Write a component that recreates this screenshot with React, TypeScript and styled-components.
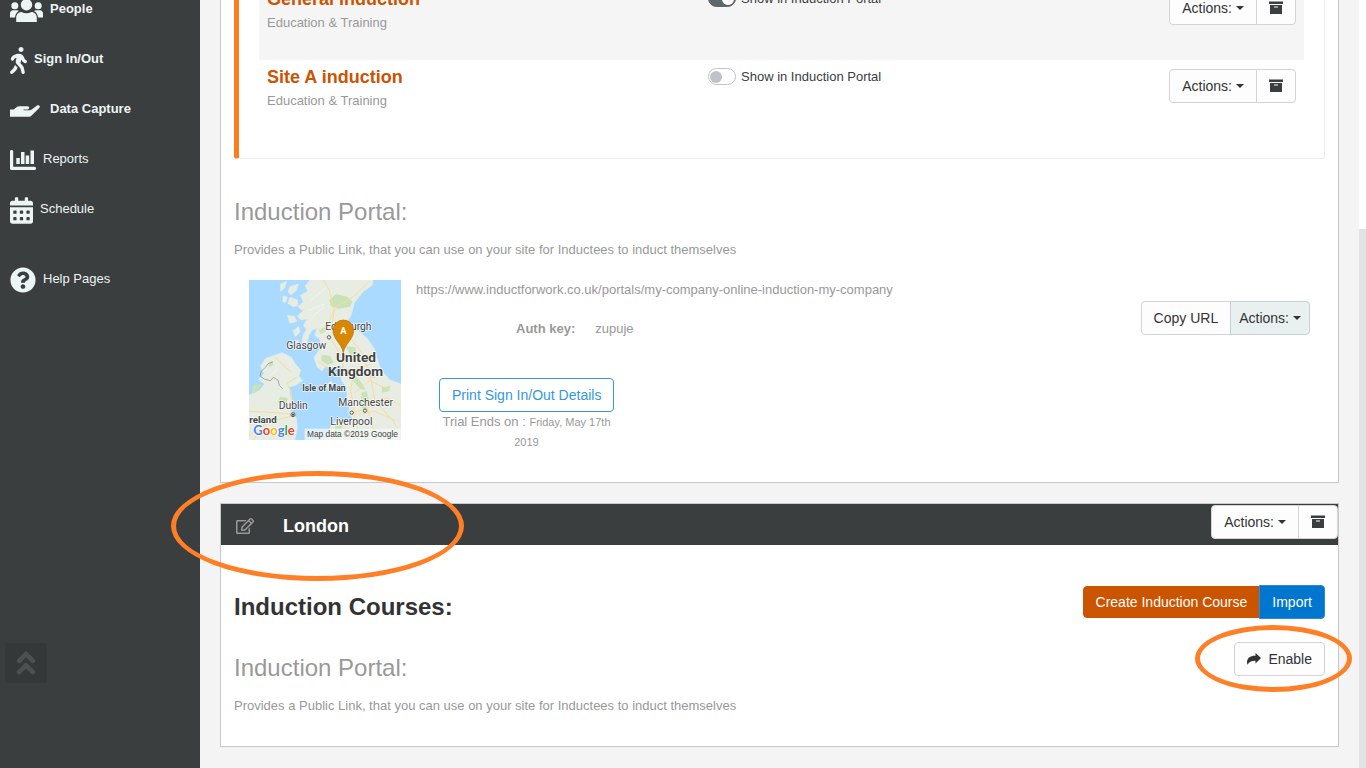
import React from "react";
import styled, { createGlobalStyle, css } from "styled-components";
import {
  FaAngleDoubleUp,
  FaCalendarAlt,
  FaQuestionCircle,
  FaRegEdit,
  FaWalking,
} from "react-icons/fa";

const GlobalStyle = createGlobalStyle`
  *, *::before, *::after { box-sizing: border-box; }
  body {
    margin: 0;
    background: #f4f4f4;
    color: #3a3d3e;
    font: 13px/20px "Liberation Sans", Arial, sans-serif;
  }
  h2, h3, p, ul { margin: 0; padding: 0; font-weight: normal; }
  ul { list-style: none; }
`;

const Shell = styled.div`
  display: grid;
  grid-template-columns: 200px minmax(0, 1fr) 7px;
  min-height: 100vh;
  overflow: hidden;
`;

const Sidebar = styled.nav`
  display: flex;
  flex-direction: column;
  justify-content: space-between;
  background: #3b3e3f;
`;

const NavList = styled.ul`
  margin-top: -15px;
`;

const NavItem = styled.li<{ $apart?: boolean }>`
  margin-top: ${(p) => (p.$apart ? "20px" : "0")};
`;

const NavLink = styled.a<{ $strong?: boolean; $gap: number }>`
  display: flex;
  align-items: center;
  gap: ${(p) => p.$gap}px;
  height: 50px;
  padding-left: 10px;
  color: #edf4f4;
  font-weight: ${(p) => (p.$strong ? "bold" : "normal")};
  text-decoration: none;

  span { padding-bottom: 2px; }
  svg { flex: none; }
`;

const TopButton = styled.button`
  display: grid;
  place-items: center;
  width: 42px;
  height: 40px;
  margin: 0 0 85px 5px;
  padding: 0;
  border: 0;
  border-radius: 3px;
  background: #343838;
  color: #4c5051;
`;

const Main = styled.main`
  padding: 0 20px 21px;
`;

const ScrollTrack = styled.div`
  background: #fff;
  padding-top: 229px;
  display: flex;
`;

const ScrollThumb = styled.div`
  flex: 1;
  background: #e3e3e3;
`;

const Panel = styled.section`
  margin-bottom: 20px;
  border: 1px solid #c8c8c8;
  background: #fff;

  &:first-child { border-top: 0; }
  &:last-child { margin-bottom: 0; }
`;

const PanelBody = styled.div`
  padding: 0 13px 30px;
`;

const CourseBox = styled.ul`
  margin-top: -19px;
  padding: 0 20px 20px;
  border: solid #ececec;
  border-width: 1px 1px 1px 5px;
  border-left-color: #ff7b1c;
  border-radius: 3px;
`;

const CourseRow = styled.li<{ $shaded?: boolean }>`
  display: grid;
  grid-template-columns: 3fr 3fr 1fr;
  align-items: start;
  height: 78px;
  padding: 8px;
  background: ${(p) => (p.$shaded ? "#f5f5f5" : "#fff")};
`;

const CourseTitle = styled.a`
  display: block;
  margin-bottom: 5px;
  color: #cb5400;
  font-size: 18px;
  font-weight: bold;
  line-height: 18px;
  text-decoration: none;
`;

const Muted = styled.p`
  color: #999;
`;

const SwitchLabel = styled.label`
  display: flex;
  align-items: center;
  gap: 5px;
  height: 17px;
`;

const Switch = styled.input`
  appearance: none;
  display: flex;
  align-items: center;
  width: 28px;
  height: 17px;
  margin: 0;
  padding: 0 1px;
  border: 1px solid #bdc3c7;
  border-radius: 9px;
  background: #fff;

  &::before {
    content: "";
    width: 12px;
    height: 12px;
    border-radius: 50%;
    background: #bdc3c7;
  }
  &:checked {
    justify-content: flex-end;
    border-color: #5c666b;
    background: #5c666b;
  }
  &:checked::before { background: #fff; }
`;

type Tone = "plain" | "tinted" | "outline" | "orange" | "blue";

const tones = {
  plain: css`background: #fdfdfd; border-color: #d4d4d4; color: #333;`,
  tinted: css`background: #e8f1f0; border-color: #c6d2d2; color: #333;`,
  outline: css`background: #fff; border-color: #3498db; color: #3498db;`,
  orange: css`background: #cb5400; border-color: #cb5400; color: #fff;`,
  blue: css`background: #0076ce; border-color: #2a8ad6; color: #fff;`,
};

const Button = styled.button<{ $tone?: Tone; $slim?: boolean; $short?: boolean }>`
  display: inline-flex;
  align-items: center;
  justify-content: center;
  gap: 4px;
  height: ${(p) => (p.$short ? 32 : 34)}px;
  padding: 0 ${(p) => (p.$slim ? 8 : 12)}px;
  border: 1px solid;
  border-radius: 4px;
  font: 14px/20px "Liberation Sans", Arial, sans-serif;
  white-space: nowrap;
  ${(p) => tones[p.$tone ?? "plain"]}
`;

const ButtonGroup = styled.div`
  display: flex;
  align-items: center;
  justify-content: flex-end;

  ${Button}:not(:first-child) {
    margin-left: -1px;
    border-top-left-radius: 0;
    border-bottom-left-radius: 0;
  }
  ${Button}:not(:last-child) {
    border-top-right-radius: 0;
    border-bottom-right-radius: 0;
  }
`;

const RowActions = styled(ButtonGroup)`
  padding-top: 1px;
`;

const Caret = styled.span`
  border: 4px solid transparent;
  border-top-color: currentColor;
  border-bottom: 0;
`;

const PortalTitle = styled.h3`
  color: #999;
  font-size: 24px;
  line-height: 26px;
`;

const PortalIntro = styled(Muted)`
  margin-top: 15px;
`;

const FirstPortal = styled.div`
  padding-top: 40px;
`;

const PortalDetails = styled.div`
  display: flex;
  align-items: flex-start;
  gap: 15px;
  padding: 20px 15px 0;
`;

const PortalInfo = styled.div`
  flex: 1;
  min-width: 0;
  color: #999;
`;

const AuthRow = styled.dl`
  display: flex;
  gap: 20px;
  margin: 19px 0 0 100px;

  dt { font-weight: bold; }
  dd { margin: 0; }
`;

const PrintBlock = styled.div`
  width: 175px;
  margin: 39px 0 0 23px;
  text-align: center;

  small { font-size: 11px; }
`;

const PortalActions = styled(ButtonGroup)`
  padding-top: 21px;
`;

const PanelHeader = styled.header`
  position: relative;
  display: flex;
  align-items: flex-start;
  justify-content: space-between;
  height: 41px;
  padding-top: 1px;
  background: #3b3e3f;
`;

const SiteName = styled.h2`
  display: flex;
  align-items: center;
  gap: 29px;
  height: 41px;
  padding-left: 15px;
  color: #fff;
  font-size: 18px;
  font-weight: bold;
`;

const EditLink = styled.a`
  display: flex;
  color: #999;
`;

const CoursesBar = styled.div`
  display: flex;
  align-items: flex-start;
  justify-content: space-between;
  padding-top: 40px;
`;

const CoursesTitle = styled.h3`
  padding-top: 9px;
  color: #333;
  font-size: 24px;
  font-weight: bold;
  line-height: 26px;
`;

const PortalBar = styled.div`
  display: flex;
  align-items: flex-start;
  justify-content: space-between;
  padding-top: 22px;

  ${PortalTitle} { padding-top: 13px; }
`;

const EnableWrap = styled.div`
  position: relative;
  display: flex;

  ${Button} { gap: 7px; }
`;

const Ring = styled.span<{ $x: number; $y: number; $w: number; $h: number }>`
  position: absolute;
  left: ${(p) => p.$x}px;
  top: ${(p) => p.$y}px;
  width: ${(p) => p.$w}px;
  height: ${(p) => p.$h}px;
  border: 5px solid #ff7f27;
  border-radius: 50%;
  pointer-events: none;
`;

const MapPicture = styled.svg`
  flex: none;
  width: 152px;
  height: 160px;

  text {
    font-family: Roboto, sans-serif;
    fill: #444;
    stroke: #fff;
    stroke-width: 5px;
    stroke-opacity: 0.75;
    stroke-linejoin: round;
    paint-order: stroke;
  }
  .plain { stroke: none; }
  .pin { fill: #fff; }
  .credit { font-family: "Liberation Sans", Arial, sans-serif; }
  .brand { font-family: Lato, sans-serif; }
`;

const ArchiveIcon = () => (
  <svg width="14" height="14" viewBox="0 0 14 14" aria-hidden="true">
    <path fill="#3b3e3f" fillRule="evenodd" d="M0 .4h14V3H0zM1 4h12v9H1zM5 5.500v1h4v-1z" />
  </svg>
);

const ShareIcon = () => (
  <svg width="14" height="12" viewBox="0 0 14 12" aria-hidden="true">
    <path fill="#333" d="M14 5 8.500 0v2.700C3 2.700.2 4.800 0 9.200c0 1 .2 1.800.5 2.500C1.900 8.900 4.200 7.700 8.500 7.700v2.700z" />
  </svg>
);

const PeopleIcon = () => (
  <svg width="33" height="26" viewBox="0 0 33 26" fill="currentColor" aria-hidden="true">
    <circle cx="16.500" cy="7.800" r="5.700" />
    <circle cx="4.800" cy="8.800" r="3.500" />
    <circle cx="28.200" cy="8.800" r="3.500" />
    <path d="M6.200 25v-4.200c0-3.600 2.400-5.800 5.400-5.800 1.400.8 3 1.200 4.900 1.200s3.500-.4 4.900-1.200c3 0 5.400 2.200 5.400 5.800V25z" />
    <path d="M0 20.500v-3.700C0 14.700 1.300 13.300 3 13.300h4c.8 0 1.500.3 2 .8-2.300 1.200-3.700 3.400-4 6.400zM33 20.500v-3.700c0-2.100-1.300-3.500-3-3.500h-4c-.8 0-1.500.3-2 .8 2.300 1.200 3.700 3.400 4 6.400z" />
  </svg>
);

const HandIcon = () => (
  <svg width="30" height="13" viewBox="0 0 30 13" fill="currentColor" aria-hidden="true">
    <path d="M0 5.500h3.600L6.200 3.400C7.200 2.600 8.200 2.300 9.400 2.300h8.300c2 0 2 3.100 0 3.100h-4.200v.9h6.100c.8 0 1.500-.2 2.100-.7l5.300-4c1.800-1.300 3.900.7 2.300 2.300l-7.700 7.600c-.9.8-1.700 1.300-3.100 1.300H0z" />
  </svg>
);

const ChartIcon = () => (
  <svg width="26" height="20" viewBox="0 0 26 20" fill="currentColor" aria-hidden="true">
    <path d="M1.500 0C2.600 0 3.200.6 3.200 1.500v15.300H24.500c2 0 2 3.200 0 3.200H1.500C.6 20 0 19.400 0 18.500v-17C0 .6.600 0 1.500 0z" />
    <path d="M6.300 8h3.500v6H6.300zM11 2h3.500v12H11zM15.700 5.500h3.500V14h-3.500zM20.500.500H24V14h-3.500z" />
  </svg>
);

const WalkIcon = styled(FaWalking)`
  width: 17px;
  height: 27px;
`;

const CalendarIcon = styled(FaCalendarAlt)`
  width: 23px;
  height: 27px;
`;

const HelpIcon = styled(FaQuestionCircle)`
  width: 26px;
  height: 26px;
`;

const UkMap = () => (
  <MapPicture viewBox="27 30 456 480" role="img" aria-label="Map of the United Kingdom">
    <rect x="27" y="30" width="456" height="480" fill="#aadaff" />
    <g fill="#e7ede3" stroke="#e7ede3" strokeWidth="2">
      <path d="M210 30L196 48 204 64 182 76 190 96 174 110 190 122 172 138 184 150 202 146 190 166 200 178 190 194 186 218 200 222 206 198 216 180 232 174 224 196 238 206 246 228 232 248 222 262 232 292 246 302 258 288 280 296 312 290 304 306 304 330 318 350 322 374 314 392 330 408 324 428 340 446 318 456 294 450 276 462 266 484 254 510H483V342L450 330 424 302 410 262 404 238 382 206 356 184 318 176 288 172 318 160 334 134 342 100 366 68 398 44V30Z" />
      <path d="M62 288L76 266 98 258 126 248 154 262 166 282 182 300 176 318 188 332 166 346 148 350 150 378 158 402 152 424 168 442 172 472 164 510H27V376L58 362 74 342 56 328 72 312Z" />
      <path d="M150 50l24-8-4 18-16 14-10-8zM130 78l12 4-6 16-8-4zM150 82l22 8 2 16-14 4-16-10zM142 136l22 4 6 14-20 6zM160 182l16-12 4 16-14 14zM162 216l12-6 2 18-10 12zM210 222l12-4 2 16-10 4zM122 42l18-8-8 22-10 8zM262 342l12-8 4 8-14 16z" />
    </g>
    <g fill="#c8e3b8">
      <path d="M268 90l20-18 34 8 16 16-8 14-34 6-24-8zM236 180l18-8 6 10-16 10zM248 254l22 4 12 20-20 6-20-14zM318 228l28 4 4 20-16 10zM348 318l18 22 10 20-16-4-20-22zM384 300l16 6 6 18-16-4zM364 368l16-4 8 30-12 26-12-8zM426 352l26-4-6 16-20 4zM120 380l24 4-6 20-24-8zM284 468l24-4-2 14-20 2zM40 346l24-4-10 20-20 8zM84 280l14-8 2 14-12 4z" />
    </g>
    <g fill="none" stroke="#f3f5ee" strokeWidth="3">
      <path d="M216 142l38-34M204 122l50-20M212 92l48-40M90 318l24-22" />
    </g>
    <g fill="none" stroke="#f8dc9c" strokeWidth="3">
      <path d="M250 30l18 30 14 60-18 44-20 26M282 120l-6 50M390 32l-46 46-50 28-14 18M268 200l18 28 26 48-6 18 36 8-10 60 12 68-4 60M286 180l48 28 34 44 22 58 14 80 38 44 32 40M340 300l54-18M342 370l46-38 66 30M336 430l44-14 60-32 42 22M354 434l50-10 62 28M380 408l20 68M236 276l26 18M40 510l34-50 52-14 30-8M96 474l60 26M28 424l50 2 74 6M158 430l-4-58-12-32 30-20M104 262l50 44M28 494l60-36" />
    </g>
    <path d="M98 276l-12 4-10 12-12 12M64 304l-4 14 14 10 18 4 8-10 14 8 4 16 10 10" fill="none" stroke="#888" strokeWidth="2" />
    <g fill="#fff" stroke="#555" strokeWidth="3">
      <circle cx="267" cy="202" r="5" />
      <circle cx="335" cy="428" r="5" />
      <circle cx="375" cy="422" r="5" />
      <circle cx="159" cy="434" r="6" />
    </g>
    <circle cx="159" cy="434" r="3" fill="#333" />
    <text x="256" y="179" fontSize="31">Edinburgh</text>
    <text x="139" y="237" fontSize="31">Glasgow</text>
    <text x="288" y="276" fontSize="41" fontWeight="700">United</text>
    <text x="264" y="317" fontSize="41" fontWeight="700">Kingdom</text>
    <text x="187" y="363" fontSize="26" fontWeight="700">Isle of Man</text>
    <text x="116" y="416" fontSize="31">Dublin</text>
    <text x="295" y="407" fontSize="31">Manchester</text>
    <text x="271" y="464" fontSize="31">Liverpool</text>
    <text x="28" y="459" fontSize="29" fontWeight="700">reland</text>
    <rect x="194" y="476" width="289" height="34" fill="#f4f6f3" fillOpacity="0.8" />
    <text className="plain credit" x="201" y="501" fontSize="25">Map data ©2019 Google</text>
    <text className="brand" x="40" y="494" fontSize="39" fontWeight="700">
      <tspan fill="#4285f4">G</tspan>
      <tspan fill="#ea4335">o</tspan>
      <tspan fill="#fbbc05">o</tspan>
      <tspan fill="#4285f4">g</tspan>
      <tspan fill="#34a853">l</tspan>
      <tspan fill="#ea4335">e</tspan>
    </text>
    <path d="M310 248C306 222 279 208 279 181a31 31 0 0 1 62 0C341 208 314 222 310 248Z" fill="#d98600" stroke="#a96d0c" strokeWidth="2" />
    <text className="plain pin" x="310" y="191" fontSize="28" fontWeight="700" textAnchor="middle">A</text>
  </MapPicture>
);

const ActionsButton = ({ tone, slim }: { tone?: Tone; slim?: boolean }) => (
  <Button type="button" $tone={tone} $slim={slim}>
    Actions:
    <Caret />
  </Button>
);

const ArchiveButton = () => (
  <Button type="button" aria-label="Archive">
    <ArchiveIcon />
  </Button>
);

const navItems = [
  { label: "People", Icon: PeopleIcon, gap: 7, strong: true },
  { label: "Sign In/Out", Icon: WalkIcon, gap: 7, strong: true },
  { label: "Data Capture", Icon: HandIcon, gap: 10, strong: true },
  { label: "Reports", Icon: ChartIcon, gap: 7 },
  { label: "Schedule", Icon: CalendarIcon, gap: 7 },
  { label: "Help Pages", Icon: HelpIcon, gap: 7, apart: true },
];

const courses = [
  { title: "General induction", shown: true },
  { title: "Site A induction", shown: false },
];

const intro = "Provides a Public Link, that you can use on your site for Inductees to induct themselves";

export default function App() {
  return (
    <>
      <GlobalStyle />
      <Shell>
        <Sidebar>
          <NavList>
            {navItems.map(({ label, Icon, gap, strong, apart }) => (
              <NavItem key={label} $apart={apart}>
                <NavLink href="#" $strong={strong} $gap={gap}>
                  <Icon />
                  <span>{label}</span>
                </NavLink>
              </NavItem>
            ))}
          </NavList>
          <TopButton type="button" aria-label="Back to top">
            <FaAngleDoubleUp size={30} />
          </TopButton>
        </Sidebar>

        <Main>
          <Panel>
            <PanelBody>
              <CourseBox>
                {courses.map((course, i) => (
                  <CourseRow key={course.title} $shaded={i % 2 === 0}>
                    <div>
                      <CourseTitle href="#">{course.title}</CourseTitle>
                      <Muted>Education &amp; Training</Muted>
                    </div>
                    <SwitchLabel>
                      <Switch type="checkbox" role="switch" defaultChecked={course.shown} />
                      Show in Induction Portal
                    </SwitchLabel>
                    <RowActions>
                      <ActionsButton />
                      <ArchiveButton />
                    </RowActions>
                  </CourseRow>
                ))}
              </CourseBox>
              <FirstPortal>
                <PortalTitle>Induction Portal:</PortalTitle>
                <PortalIntro>{intro}</PortalIntro>
                <PortalDetails>
                  <UkMap />
                  <PortalInfo>
                    <p>https://www.inductforwork.co.uk/portals/my-company-online-induction-my-company</p>
                    <AuthRow>
                      <dt>Auth key:</dt>
                      <dd>zupuje</dd>
                    </AuthRow>
                    <PrintBlock>
                      <Button type="button" $tone="outline">Print Sign In/Out Details</Button>
                      <p>
                        Trial Ends on : <small>Friday, May 17th 2019</small>
                      </p>
                    </PrintBlock>
                  </PortalInfo>
                  <PortalActions>
                    <Button type="button">Copy URL</Button>
                    <ActionsButton tone="tinted" slim />
                  </PortalActions>
                </PortalDetails>
              </FirstPortal>
            </PanelBody>
          </Panel>

          <Panel>
            <PanelHeader>
              <SiteName>
                <EditLink href="#" aria-label="Edit site">
                  <FaRegEdit size={18} />
                </EditLink>
                London
              </SiteName>
              <ButtonGroup>
                <ActionsButton />
                <ArchiveButton />
              </ButtonGroup>
              <Ring $x={-50} $y={-33} $w={293} $h={110} />
            </PanelHeader>
            <PanelBody>
              <CoursesBar>
                <CoursesTitle>Induction Courses:</CoursesTitle>
                <ButtonGroup>
                  <Button type="button" $tone="orange" $short>Create Induction Course</Button>
                  <Button type="button" $tone="blue">Import</Button>
                </ButtonGroup>
              </CoursesBar>
              <PortalBar>
                <PortalTitle>Induction Portal:</PortalTitle>
                <EnableWrap>
                  <Button type="button">
                    <ShareIcon />
                    Enable
                  </Button>
                  <Ring $x={-39} $y={-17} $w={157} $h={67} />
                </EnableWrap>
              </PortalBar>
              <PortalIntro>{intro}</PortalIntro>
            </PanelBody>
          </Panel>
        </Main>

        <ScrollTrack>
          <ScrollThumb />
        </ScrollTrack>
      </Shell>
    </>
  );
}
